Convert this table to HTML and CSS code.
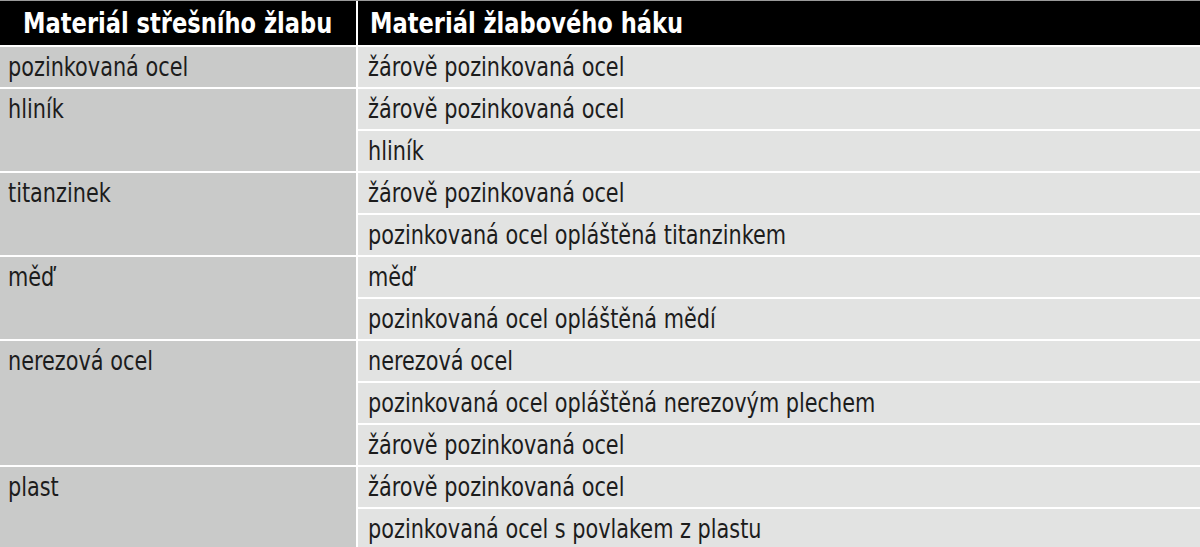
FILE: index.html
```html
<!DOCTYPE html>
<html lang="cs">
<head>
<meta charset="utf-8">
<title>Materiály</title>
<link rel="stylesheet" href="styles.css">
</head>
<body>
<div class="table">
  <div class="th th-left"><span class="tt">Materiál střešního žlabu</span></div>
  <div class="th th-right"><span class="tt">Materiál žlabového háku</span></div>

  <div class="cl span1"><span class="t">pozinkovaná ocel</span></div>
  <div class="cr"><span class="t">žárově pozinkovaná ocel</span></div>

  <div class="cl span2"><span class="t">hliník</span></div>
  <div class="cr"><span class="t">žárově pozinkovaná ocel</span></div>
  <div class="cr"><span class="t">hliník</span></div>

  <div class="cl span2"><span class="t">titanzinek</span></div>
  <div class="cr"><span class="t">žárově pozinkovaná ocel</span></div>
  <div class="cr"><span class="t">pozinkovaná ocel opláštěná titanzinkem</span></div>

  <div class="cl span2"><span class="t">měď</span></div>
  <div class="cr"><span class="t">měď</span></div>
  <div class="cr"><span class="t">pozinkovaná ocel opláštěná mědí</span></div>

  <div class="cl span3"><span class="t">nerezová ocel</span></div>
  <div class="cr"><span class="t">nerezová ocel</span></div>
  <div class="cr"><span class="t">pozinkovaná ocel opláštěná nerezovým plechem</span></div>
  <div class="cr"><span class="t">žárově pozinkovaná ocel</span></div>

  <div class="cl span2"><span class="t">plast</span></div>
  <div class="cr"><span class="t">žárově pozinkovaná ocel</span></div>
  <div class="cr"><span class="t">pozinkovaná ocel s povlakem z plastu</span></div>
</div>
</body>
</html>
```

FILE: styles.css
```css
html, body {
  margin: 0;
  padding: 0;
  background: #ffffff;
}

body {
  font-family: "DejaVu Sans Condensed", "Liberation Sans", sans-serif;
  color: #1c1c1c;
  overflow: hidden;
}

.table {
  display: grid;
  grid-template-columns: 356px 1fr;
  grid-auto-rows: 40px;
  grid-template-rows: 44px;
  column-gap: 2px;
  row-gap: 2px;
  border-top: 1px solid #9a9a9a;
  background: #ffffff;
}

.th {
  background: #000000;
  color: #ffffff;
  font-weight: bold;
  font-size: 29px;
  line-height: 44px;
  white-space: nowrap;
  overflow: hidden;
}

.th-left {
  text-align: center;
}

.th-right {
  padding-left: 12px;
}

.tt {
  display: inline-block;
  transform: scaleX(0.865);
}

.th-left .tt {
  transform-origin: center;
  margin: 0 -40px;
}

.th-right .tt {
  transform-origin: left center;
}

.cl, .cr {
  font-size: 26px;
  line-height: 40px;
  white-space: nowrap;
}

.t {
  display: inline-block;
  transform: scaleX(0.89);
  transform-origin: left center;
}

.cl {
  background: #c9cac9;
  padding-left: 8px;
}

.cr {
  background: #e2e3e2;
  padding-left: 10px;
}

.span1 { grid-row: span 1; }
.span2 { grid-row: span 2; }
.span3 { grid-row: span 3; }
```
